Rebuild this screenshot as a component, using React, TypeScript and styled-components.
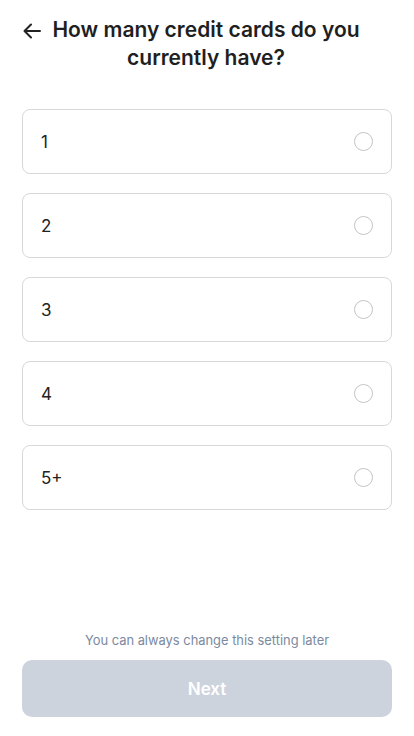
import { useState } from 'react'
import styled, { createGlobalStyle } from 'styled-components'

const GlobalStyle = createGlobalStyle`
  html, body {
    margin: 0;
    padding: 0;
    background: #ffffff;
  }
  body {
    font-family: Inter, "Noto Sans", sans-serif;
  }
`

const Page = styled.div`
  width: 414px;
  height: 736px;
  box-sizing: border-box;
  padding: 0 22px;
  display: flex;
  flex-direction: column;
`

const Header = styled.div`
  display: flex;
  align-items: flex-start;
  padding-top: 16px;
  gap: 8px;
`

const BackButton = styled.button`
  border: none;
  background: none;
  padding: 0;
  margin-top: 7px;
  width: 20px;
  height: 18px;
  cursor: pointer;
  color: #222;
  flex-shrink: 0;
`

const Title = styled.h1`
  flex: 1;
  margin: 0;
  font-size: 21px;
  line-height: 28px;
  font-weight: 600;
  color: #1f1f1f;
  text-align: center;
  padding-right: 30px;
`

const Options = styled.div`
  display: flex;
  flex-direction: column;
  gap: 19px;
  margin-top: 37px;
`

const Option = styled.label<{ $active: boolean }>`
  height: 65px;
  box-sizing: border-box;
  border: 1.5px solid ${p => (p.$active ? '#8a96a8' : '#d8d8d8')};
  border-radius: 8px;
  display: flex;
  align-items: center;
  justify-content: space-between;
  padding: 0 18px 0 18px;
  font-size: 17px;
  color: #222;
  cursor: pointer;
`

const Radio = styled.span<{ $active: boolean }>`
  width: 19px;
  height: 19px;
  border-radius: 50%;
  box-sizing: border-box;
  border: 1px solid ${p => (p.$active ? '#555' : '#c4c4c4')};
  background: ${p => (p.$active ? 'radial-gradient(#555 40%, #fff 45%)' : '#fff')};
`

const Footer = styled.div`
  margin-top: auto;
  padding-bottom: 19px;
  display: flex;
  flex-direction: column;
  align-items: center;
`

const Hint = styled.p`
  margin: 0 0 12px;
  font-size: 12.9px;
  color: #7c8aa0;
`

const NextButton = styled.button`
  width: 100%;
  height: 57px;
  border: none;
  border-radius: 10px;
  background: #cdd3dd;
  color: #ffffff;
  font-family: inherit;
  font-size: 17px;
  font-weight: 600;
`

const choices = ['1', '2', '3', '4', '5+']

export default function App() {
  const [picked, setPicked] = useState<string | null>(null)

  return (
    <>
      <GlobalStyle />
      <Page>
        <Header>
          <BackButton aria-label="Back">
            <svg width="18" height="16" viewBox="0 0 18 16" fill="none" stroke="currentColor" strokeWidth="2" strokeLinecap="round" strokeLinejoin="round">
              <path d="M17 8H1.5M8 1.5L1.5 8L8 14.5" />
            </svg>
          </BackButton>
          <Title>How many credit cards do you currently have?</Title>
        </Header>
        <Options>
          {choices.map(c => (
            <Option key={c} $active={picked === c} onClick={() => setPicked(c)}>
              {c}
              <Radio $active={picked === c} />
            </Option>
          ))}
        </Options>
        <Footer>
          <Hint>You can always change this setting later</Hint>
          <NextButton disabled={picked === null}>Next</NextButton>
        </Footer>
      </Page>
    </>
  )
}
